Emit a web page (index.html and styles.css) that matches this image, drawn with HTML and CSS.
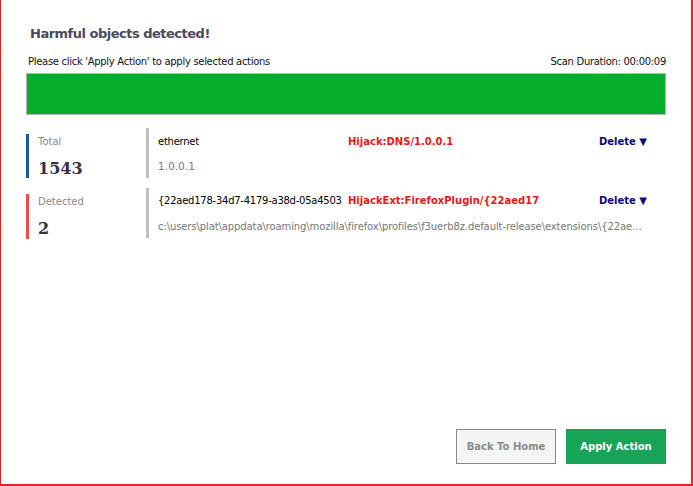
FILE: index.html
```html
<!DOCTYPE html>
<html>
<head>
<meta charset="utf-8">
<link rel="stylesheet" href="styles.css">
</head>
<body>
<div class="frame">
  <h1 class="title">Harmful objects detected!</h1>
  <div class="subline">
    <span>Please click 'Apply Action' to apply selected actions</span>
    <span>Scan Duration: 00:00:09</span>
  </div>
  <div class="progress"><div class="progress-fill"></div></div>

  <div class="results">
    <div class="row row-first">
      <div class="stat stat-total">
        <div class="stat-label">Total</div>
        <div class="stat-value">1543</div>
      </div>
      <div class="item">
        <div class="item-line">
          <span class="item-name">ethernet</span>
          <span class="item-threat">Hijack:DNS/1.0.0.1</span>
          <span class="item-action">Delete &#9660;</span>
        </div>
        <div class="item-path">1.0.0.1</div>
      </div>
    </div>
    <div class="row row-second">
      <div class="stat stat-detected">
        <div class="stat-label">Detected</div>
        <div class="stat-value">2</div>
      </div>
      <div class="item">
        <div class="item-line">
          <span class="item-name">{22aed178-34d7-4179-a38d-05a4503</span>
          <span class="item-threat">HijackExt:FirefoxPlugin/{22aed17</span>
          <span class="item-action">Delete &#9660;</span>
        </div>
        <div class="item-path">c:\users\plat\appdata\roaming\mozilla\firefox\profiles\f3uerb8z.default-release\extensions\{22ae…</div>
      </div>
    </div>
  </div>

  <div class="actions">
    <button class="btn btn-back">Back To Home</button>
    <button class="btn btn-apply">Apply Action</button>
  </div>
</div>
</body>
</html>
```
FILE: styles.css
```css
html, body {
  margin: 0;
  padding: 0;
  background: #ffffff;
}
body {
  font-family: "DejaVu Sans", Verdana, sans-serif;
  font-size: 10px;
  color: #000;
}
.frame {
  box-sizing: border-box;
  width: 693px;
  height: 486px;
  border-left: 1px solid #e0262b;
  border-right: 2px solid #e0262b;
  border-bottom: 2px solid #e0262b;
  padding: 0 25px 0 25px;
  display: flex;
  flex-direction: column;
}
.title {
  margin: 25px 0 0 4px;
  font-size: 13px;
  font-weight: bold;
  color: #4a4a5c;
  line-height: 18px;
  letter-spacing: -0.5px;
}
.subline {
  display: flex;
  justify-content: space-between;
  margin: 12px 0 0 2px;
  font-size: 10px;
  line-height: 14px;
  color: #111;
  letter-spacing: -0.3px;
}
.progress {
  margin-top: 4px;
  height: 40px;
  border: 1px solid #b4b4b4;
  background: #fff;
}
.progress-fill {
  height: 100%;
  width: 100%;
  background: #07ae2a;
}
.results {
  margin-top: 13px;
  display: flex;
  flex-direction: column;
  gap: 10px;
}
.row {
  display: flex;
}
.stat {
  width: 108px;
  padding-left: 9px;
  border-left: 3px solid #1b58a8;
  margin-top: 6px;
  height: 44px;
}
.stat-detected {
  border-left-color: #f04a4f;
  height: 45px;
}
.stat-label {
  color: #888;
  font-size: 10px;
  line-height: 14px;
  margin-top: 1px;
}
.stat-value {
  font-family: "DejaVu Serif", Georgia, serif;
  font-weight: bold;
  font-size: 16px;
  color: #333344;
  margin-top: 11px;
  line-height: 18px;
}
.item {
  flex: 1;
  border-left: 3px solid #c0c0c0;
  padding-left: 9px;
  height: 50px;
}
.item-line {
  display: flex;
  line-height: 14px;
}
.row-first .item-line {
  margin-top: 7px;
}
.row-second .item-line {
  margin-top: 6px;
}
.item-name {
  width: 190px;
  flex: none;
  white-space: nowrap;
  color: #000;
  letter-spacing: -0.25px;
}
.item-threat {
  flex: 1;
  color: #f21515;
  font-weight: bold;
  white-space: nowrap;
}
.item-action {
  width: 67px;
  flex: none;
  color: #0a0a7a;
  font-weight: bold;
}
.item-path {
  color: #777;
  line-height: 14px;
  white-space: nowrap;
  letter-spacing: -0.1px;
}
.row-first .item-path {
  margin-top: 11px;
  letter-spacing: 0.3px;
}
.row-second .item-path {
  margin-top: 12px;
}
.actions {
  margin-top: auto;
  margin-bottom: 20px;
  display: flex;
  justify-content: flex-end;
  gap: 10px;
}
.btn {
  box-sizing: border-box;
  width: 100px;
  height: 35px;
  font-family: "DejaVu Sans", Verdana, sans-serif;
  font-size: 10px;
  font-weight: bold;
  padding: 0;
}
.btn-back {
  background: #f4f4f4;
  border: 1px solid #888;
  color: #8a8a8a;
}
.btn-apply {
  background: #17a456;
  border: none;
  color: #fff;
}
```
